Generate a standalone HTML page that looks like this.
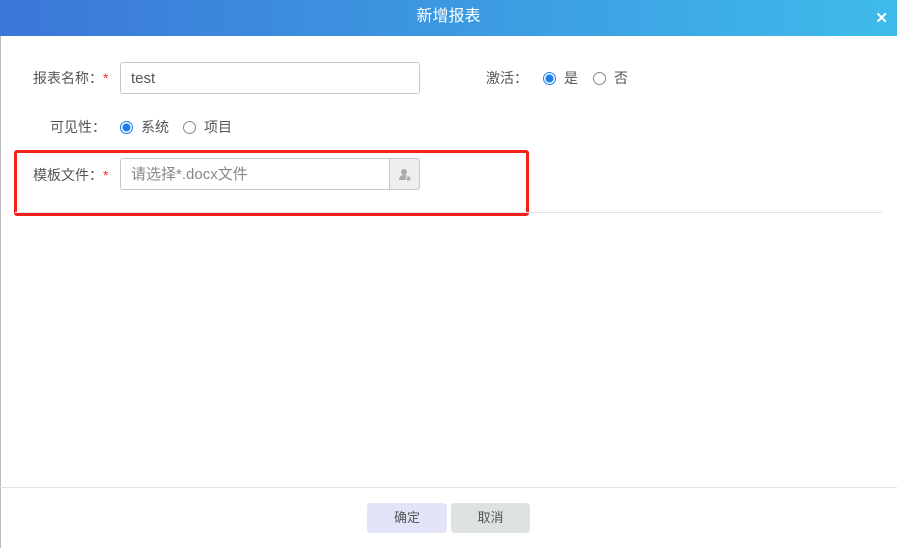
<!DOCTYPE html>
<html><head><meta charset="utf-8"><style>
*{margin:0;padding:0;box-sizing:border-box}
body{width:897px;height:548px;background:#fff;font-family:"Liberation Sans","Noto Sans CJK SC",sans-serif;font-size:14px;color:#555;position:relative;overflow:hidden}
.hd{position:absolute;left:0;top:0;width:897px;height:36px;background:linear-gradient(90deg,#3b76d8,#3ebbea);color:#fff;text-align:center;line-height:34px;font-size:16px}
.x{position:absolute;right:9px;top:1px;font-size:15px;font-weight:bold;line-height:36px}
.a{position:absolute;white-space:nowrap}
.req{color:#e33}
.inp{position:absolute;border:1px solid #c8c8c8;border-radius:3px;height:32px;line-height:32px;padding-left:10px;font-size:15px}
.r{display:inline-block;width:13px;height:13px;border-radius:50%;border:1px solid #888;vertical-align:-2px;margin-right:8px}
.r.on{border:1px solid #1e7ee8;background:radial-gradient(circle,#1e7ee8 3.5px,#fff 4.5px)}
.btn{position:absolute;top:503px;height:30px;width:80px;border-radius:4px;text-align:center;line-height:30px;font-size:13px;color:#555}
</style></head><body>
<div class="hd">新增报表<span class="x">✕</span></div>
<div style="position:absolute;left:0;top:36px;width:1px;height:512px;background:#bbb"></div>
<div class="a" style="left:33px;top:68px">报表名称：<span class="req">*</span></div>
<div class="inp" style="left:120px;top:62px;width:300px;color:#555">test</div>
<div class="a" style="left:486px;top:68px">激活：</div>
<div class="a" style="left:543px;top:68px"><span class="r on"></span>是<span style="display:inline-block;width:15px"></span><span class="r"></span>否</div>
<div class="a" style="left:50px;top:117px">可见性：</div>
<div class="a" style="left:120px;top:117px"><span class="r on"></span>系统<span style="display:inline-block;width:14px"></span><span class="r"></span>项目</div>
<div class="a" style="left:33px;top:165px">模板文件：<span class="req">*</span></div>
<div class="inp" style="left:120px;top:158px;width:270px;color:#888;border-radius:3px 0 0 3px">请选择*.docx文件</div>
<div style="position:absolute;left:389px;top:158px;width:31px;height:32px;border:1px solid #c8c8c8;background:#eee;border-radius:0 3px 3px 0">
<svg width="31" height="32" viewBox="0 0 31 32"><circle cx="14" cy="13" r="3" fill="#aaa"/><path d="M9 21c0-3 2-5 5-5s5 2 5 5z" fill="#aaa"/><circle cx="18.5" cy="19.5" r="2.5" fill="#aaa" stroke="#eee"/></svg></div>
<div style="position:absolute;left:14px;top:150px;width:515px;height:66px;border:3px solid #f3201b;border-radius:3px"></div>
<div style="position:absolute;left:15px;top:212px;width:867px;height:1px;background:#e2e2e2"></div>
<div style="position:absolute;left:0;top:487px;width:897px;height:1px;background:#e2e2e2"></div>
<div class="btn" style="left:367px;background:#e3e4f8">确定</div>
<div class="btn" style="left:451px;width:79px;background:#dfe2e2">取消</div>
</body></html>
